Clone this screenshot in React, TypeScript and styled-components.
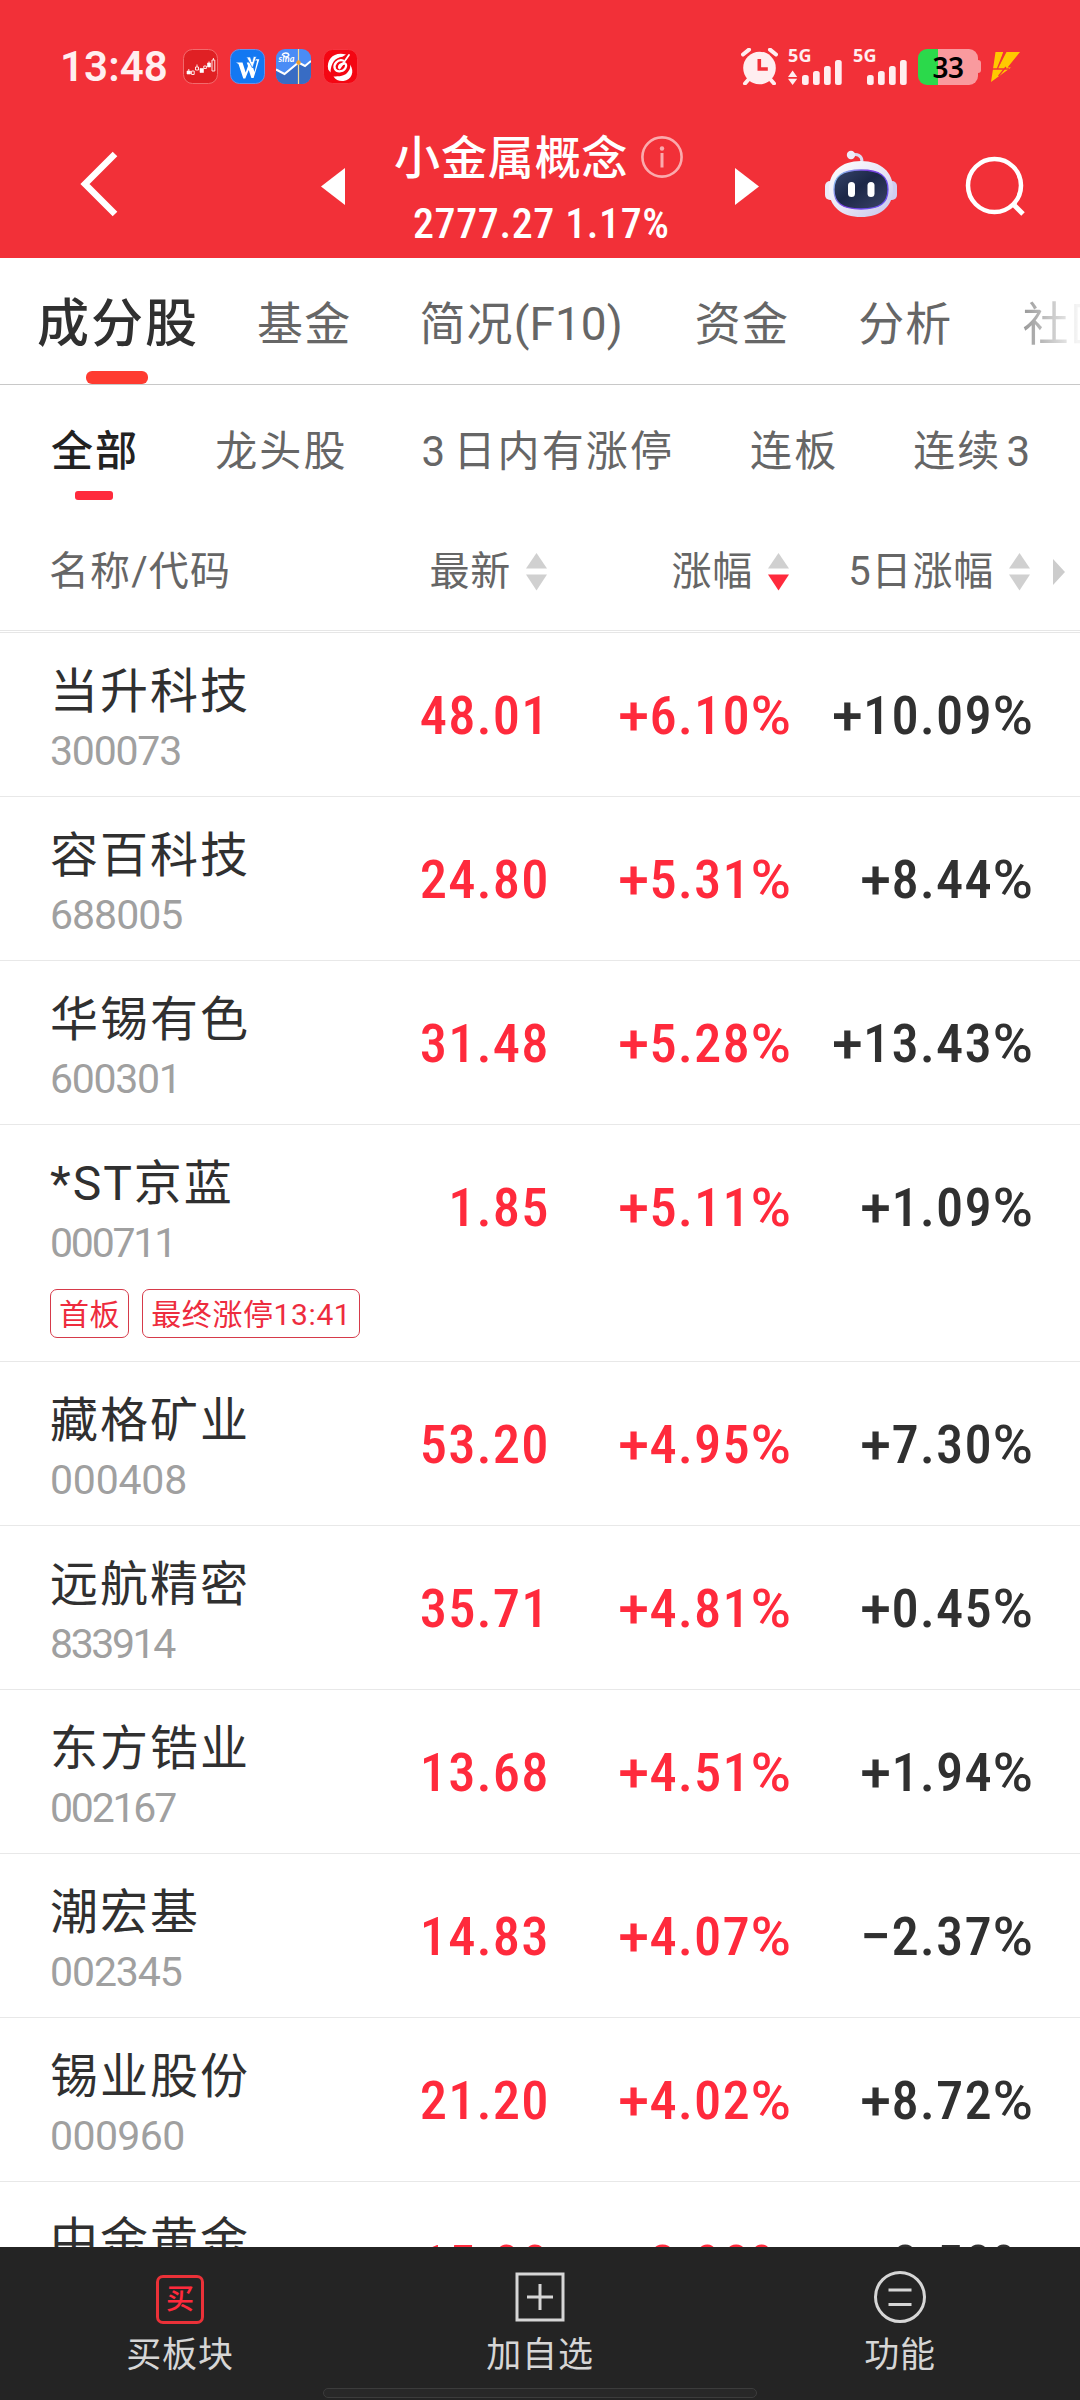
import React from "react";
import styled, { createGlobalStyle } from "styled-components";

const RED = "#ff2a3c";
const CJK = `Roboto, "Noto Sans CJK SC", sans-serif`;
const NUM = `"Roboto Condensed", Roboto, "Noto Sans CJK SC", sans-serif`;

const GlobalStyle = createGlobalStyle`
  * { box-sizing: border-box; }
  body { margin: 0; background: #fff; font-family: ${CJK}; }
`;

const Screen = styled.main`
  display: flex;
  flex-direction: column;
  width: 1080px;
  height: 2400px;
  overflow: hidden;
  background: #fff;
  white-space: nowrap;
`;

/* ---------- header ---------- */
const Header = styled.header`
  display: flex;
  flex-direction: column;
  flex: none;
  height: 258px;
  background: #f23038;
  color: #fff;
`;

const StatusBar = styled.div`
  display: flex;
  justify-content: space-between;
  align-items: center;
  height: 85px;
  margin-top: 24px;
  padding: 0 59px 0 60px;
`;

const StatusGroup = styled.div`
  display: flex;
  align-items: center;
`;

const Clock = styled.span`
  width: 123px;
  font: 600 42px/50px Roboto, sans-serif;
  letter-spacing: 0.1px;
  color: #ffeef0;
`;

const AppIcons = styled.div`
  display: flex;
  gap: 11.5px;
`;

const StatusIcon = styled.svg<{ $gap?: number }>`
  display: block;
  flex: none;
  margin-left: ${(p) => p.$gap ?? 0}px;
`;

const Network = styled.div<{ $gap: number }>`
  display: flex;
  flex-direction: column;
  align-items: flex-start;
  height: 36px;
  margin-left: ${(p) => p.$gap}px;
`;

const NetworkLabel = styled.span`
  height: 11px;
  font: 700 18px/13px "Noto Sans", sans-serif;
  letter-spacing: 0.2px;
  color: #ffeef0;
`;

const Battery = styled.div`
  display: flex;
  align-items: center;
  margin-left: 10px;
`;

const BatteryBody = styled.div`
  width: 60px;
  height: 36px;
  border-radius: 9px;
  background: linear-gradient(90deg, #2bd94b 0 33%, #f99a9e 33%);
  color: #000;
  text-align: center;
  font: 600 28px/36px "Noto Sans", sans-serif;
  letter-spacing: -0.5px;
`;

const BatteryNub = styled.i`
  width: 3px;
  height: 13px;
  border-radius: 0 3px 3px 0;
  background: #f99a9e;
`;

const NavBar = styled.nav`
  display: grid;
  grid-template-columns: 321px 24px 390px 24px 66px 72px 51px 78px;
  align-items: center;
  height: 149px;
`;

const BackIcon = styled.svg`
  display: block;
  margin-left: 76px;
`;

const Arrow = styled.svg`
  display: block;
  margin-top: 5px;
`;

const TitleBlock = styled.div`
  display: flex;
  flex-direction: column;
  align-items: flex-start;
  padding: 15px 0 0 49px;
`;

const TitleLine = styled.div`
  display: flex;
  align-items: center;
  gap: 12px;
  height: 62px;
  font-size: 46px;
  font-weight: 500;
  letter-spacing: 0.9px;
  line-height: 64px;
`;

const InfoIcon = styled.svg`
  display: block;
  margin-top: -3px;
`;

const IndexLine = styled.div`
  margin: 4px 0 0 19px;
  font: 500 42px/62px ${NUM};
  letter-spacing: 0.6px;
  word-spacing: 0;
`;

const Robot = styled.svg`
  display: block;
`;

const Search = styled.svg`
  display: block;
  margin: 6px 0 0 66px;
`;

/* ---------- primary tabs ---------- */
const Tabs = styled.div`
  display: flex;
  align-items: center;
  flex: none;
  height: 127px;
  overflow: hidden;
  border-bottom: 1px solid #c8c8c8;
  padding-left: 37px;
`;

const Tab = styled.a<{ $active?: boolean; $gap?: number }>`
  position: relative;
  flex: none;
  height: 126px;
  margin-left: ${(p) => p.$gap ?? 0}px;
  font-size: ${(p) => (p.$active ? 52 : 46)}px;
  font-weight: ${(p) => (p.$active ? 500 : 400)};
  letter-spacing: ${(p) => (p.$active ? 2 : 1.2)}px;
  line-height: ${(p) => (p.$active ? 134 : 132)}px;
  color: ${(p) => (p.$active ? "#303030" : "#666")};
`;

const TabLatin = styled.span`
  letter-spacing: 0;
`;

const TabMark = styled.i`
  position: absolute;
  left: 49px;
  bottom: 0;
  width: 62px;
  height: 13px;
  border-radius: 6px;
  background: #ff3b30;
`;

const FadingTab = styled(Tab)`
  width: 57px;
  overflow: hidden;
  color: transparent;
  background: linear-gradient(90deg, #999 0, #f4f4f4 54px);
  background-clip: text;
  -webkit-background-clip: text;
`;

/* ---------- secondary tabs ---------- */
const Filters = styled.div`
  display: flex;
  flex: none;
  height: 128px;
  padding-left: 51px;
`;

const Filter = styled.a<{ $active?: boolean; $gap?: number }>`
  position: relative;
  flex: none;
  height: 115px;
  margin-left: ${(p) => p.$gap ?? 0}px;
  font-size: 42px;
  font-weight: ${(p) => (p.$active ? 500 : 400)};
  letter-spacing: 2.1px;
  line-height: 134px;
  color: ${(p) => (p.$active ? "#222" : "#666")};
`;

const FilterMark = styled.i`
  position: absolute;
  left: 24px;
  bottom: 0;
  width: 38px;
  height: 9px;
  border-radius: 3px;
  background: ${RED};
`;

const WideDigit = styled.span<{ $lead?: number }>`
  display: inline-block;
  width: 32px;
  margin-left: ${(p) => p.$lead ?? 0}px;
`;

/* ---------- table ---------- */
const COLUMNS = "376px 172px 242px 290px";

const TableHead = styled.div`
  display: grid;
  grid-template-columns: ${COLUMNS};
  align-items: center;
  flex: none;
  height: 120px;
  border-bottom: 3px double #e6e6e6;
  color: #666;
  font-size: 40px;
  letter-spacing: 0.8px;
`;

const HeadCell = styled.div<{ $first?: boolean; $last?: boolean }>`
  display: flex;
  align-items: center;
  justify-content: ${(p) => (p.$first ? "flex-start" : "flex-end")};
  gap: 15px;
  padding-left: ${(p) => (p.$first ? 49 : 0)}px;
  padding-right: ${(p) => (p.$last ? 15 : 1)}px;
  line-height: 60px;
  letter-spacing: ${(p) => (p.$first ? 1.1 : 0.8)}px;
`;

const MoreArrow = styled.svg`
  display: block;
  margin-left: 8px;
`;

const List = styled.section`
  flex: 1;
  min-height: 0;
  overflow: hidden;
`;

const Row = styled.article`
  display: grid;
  grid-template-columns: ${COLUMNS};
  border-bottom: 1px solid #e8e8e8;
`;

const NameCell = styled.div`
  display: flex;
  flex-direction: column;
  height: 163px;
  padding: 28px 0 0 50px;
`;

const StockName = styled.span`
  height: 62px;
  font-size: 48px;
  line-height: 62px;
  letter-spacing: 2px;
  color: #303030;
`;

const StockCode = styled.span<{ $tracking: number }>`
  height: 56px;
  font-size: 41px;
  line-height: 56px;
  letter-spacing: ${(p) => p.$tracking}px;
  color: #a0a0a0;
`;

const Value = styled.span<{ $tone: "up" | "plain"; $inset?: number }>`
  height: 163px;
  margin-right: -1.5px;
  padding-right: ${(p) => p.$inset ?? 0}px;
  text-align: right;
  font: 500 54.5px/165px ${NUM};
  letter-spacing: 1.1px;
  color: ${(p) => (p.$tone === "up" ? RED : "#303030")};
`;

const WideSign = styled.span`
  font-family: Roboto, sans-serif;
  letter-spacing: 0.6px;
`;

const TagLine = styled.div`
  display: flex;
  gap: 13px;
  grid-column: 1 / -1;
  height: 73px;
  padding: 1px 0 0 50px;
`;

const Tag = styled.span`
  height: 49px;
  padding: 0 8px;
  border: 1px solid #d63a4a;
  border-radius: 7px;
  font-size: 30px;
  line-height: 49px;
  letter-spacing: 0.6px;
  color: #ee2c3e;
`;

/* ---------- bottom bar ---------- */
const BottomBar = styled.footer`
  position: relative;
  display: grid;
  grid-template-columns: repeat(3, 1fr);
  flex: none;
  height: 153px;
  background: #242424;
  color: #d6d6d6;
`;

const Action = styled.button`
  display: flex;
  flex-direction: column;
  align-items: center;
  padding: 22px 0 0;
  border: 0;
  background: none;
  color: inherit;
  font: 400 35px/50px ${CJK};
  letter-spacing: 0.8px;
`;

const ActionIcon = styled.div`
  display: flex;
  align-items: center;
  justify-content: center;
  height: 56px;
  margin-bottom: 6px;
`;

const BuyBadge = styled.span`
  width: 48px;
  height: 49px;
  margin-top: 4px;
  border: 3px solid #ea3138;
  border-radius: 7px;
  color: ${RED};
  font: 500 28px/44px ${CJK};
  letter-spacing: 0;
  text-align: center;
`;

const HomePill = styled.i`
  position: absolute;
  left: 323px;
  bottom: 2px;
  width: 434px;
  height: 10px;
  border: 1px solid #3c3c3c;
  border-radius: 5px;
  background: #282828;
`;

const Signal = ({ data }: { data?: boolean }) => (
  <StatusIcon width="55" height="25" viewBox="0 0 55 25" fill="#ffeef0">
    {data && <path d="M0 17 4.6 10.500 9.200 17zM0 18.800h9.200L4.600 25z" />}
    <rect x="14" y="15" width="6.700" height="10" rx="2.500" />
    <rect x="25" y="11" width="6.700" height="14" rx="2.500" />
    <rect x="36" y="6" width="6.700" height="19" rx="2.500" />
    <rect x="47" y="0" width="6.700" height="25" rx="2.500" />
  </StatusIcon>
);

const Sorter = ({ desc }: { desc?: boolean }) => (
  <svg width="21" height="38" viewBox="0 0 21 38">
    <path d="M10.500 0 21 15.500H0z" fill="#d0d0d0" />
    <path d="M0 21.500h21L10.500 37.500z" fill={desc ? RED : "#d0d0d0"} />
  </svg>
);

const AlarmIcon = () => (
  <StatusIcon width="37" height="37" viewBox="0 0 37 37">
    <circle cx="18.500" cy="20" r="16.300" fill="#ffeef0" />
    <path d="M2 6.500 8 1.600M35 6.500 29 1.600M7.500 31.500 4 35.500M29.500 31.500 33 35.500" stroke="#ffeef0" strokeWidth="4" strokeLinecap="round" />
    <path d="M18.300 11v10h8.500" fill="none" stroke="#f23038" strokeWidth="3.600" />
  </StatusIcon>
);

const CandleAppIcon = () => (
  <svg width="35" height="35" viewBox="0 0 35 35">
    <rect x=".5" y=".5" width="34" height="34" rx="9" fill="#e02024" stroke="#f26a6c" />
    <path d="M4 22h3.500v3H4zM17 19.500h3.500v4H17zM24.500 14h3v4h-3z" fill="#fff" stroke="#fff" strokeWidth=".6" />
    <path d="M8.600 22h2.600v3.500H8.600zM12.500 18h3v3h-3zM20.800 17h2.600v2.500h-2.600zM29 11h2.800v11H29zM14 15.500V18M5.800 20v2M26 12.500v2M30.400 9v2" fill="none" stroke="#ffe6e6" strokeWidth="1" />
  </svg>
);

const WAppIcon = () => (
  <svg width="35" height="35" viewBox="0 0 35 35">
    <rect x=".5" y=".5" width="34" height="34" rx="9" fill="#1378f2" stroke="#6a8fe8" />
    <path d="M6 13.500h6.500l3.200 10L18 17l-1.200-3.500h4.700l3 9.500 2.700-11.500h-2.400l.5-1.200h4L23.600 29h-2.200l-2.700-8-3.400 8.500h-2L8.500 15z" fill="#fff" />
    <path d="M16.500 8h3.800l1.700 5 1.500-5.500h3L22.500 19z" fill="#fff" stroke="#1378f2" strokeWidth=".7" />
  </svg>
);

const ChartAppIcon = () => (
  <svg width="35" height="35" viewBox="0 0 35 35">
    <defs>
      <clipPath id="chartClip"><rect width="35" height="35" rx="9" /></clipPath>
    </defs>
    <g clipPath="url(#chartClip)">
      <rect width="35" height="35" fill="#4a8cf6" />
      <path d="M0 20.500 8.500 25 22.500 13.500 29 17 35 12v23H0z" fill="#386cc4" />
      <path d="M0 20.500 8.500 25 22.500 13.500 29 17 35 12" fill="none" stroke="#fff" strokeWidth="2" />
      <path d="M22.500 0v35" stroke="#f5dc9a" strokeWidth="1.200" />
      <circle cx="22.500" cy="13.500" r="2.200" fill="#f0a030" />
      <path d="M6 6.500c1-3 6-3.500 7-.5-1 2.500-5 2.500-5.500.5" fill="none" stroke="#fff" strokeWidth="1.300" />
      <text x="2.500" y="13" fontSize="9" fontWeight="700" fontStyle="italic" fontFamily="Lato" fill="#fff" textLength="16">sina</text>
    </g>
  </svg>
);

const SwirlAppIcon = () => (
  <svg width="35" height="35" viewBox="0 0 35 35">
    <rect x=".5" y=".5" width="34" height="34" rx="9" fill="#f40612" stroke="#f6353f" />
    <path d="M23 5.500C12 2 3 9.500 5.200 20.500l2.300 3C8 14 12 8.500 19.500 7.800z" fill="#fff" />
    <path d="M10.500 27.500c5-.5 12 1 16-7 .8-1.800.8-3.500.5-5 5 7 1.500 15.500-6.500 16.500-4 .4-8-1-10-4.500z" fill="#fff" />
    <path d="M20 11.500c-5.500-1.500-10 4-8 8.500 2 3.800 9.500 3 11-2.500.5-2-.5-3.200-2-3-2.500.4-5 2-5 4" fill="none" stroke="#fff" strokeWidth="2.300" strokeLinecap="round" />
    <path d="M26 6 16.500 19.500" stroke="#fff" strokeWidth="1.800" strokeLinecap="round" />
  </svg>
);

const BoltIcon = () => (
  <StatusIcon $gap={9} width="31" height="32" viewBox="0 0 31 32" fill="#ffc800">
    <path d="M5.500 1h7.800L9 15.500 16.500 1H30L17.500 16.500H21L1 31 3 18z" />
    <path d="M14.500 0 7.500 17.500M2 18h17M16 16 8.500 25" fill="none" stroke="#f23038" strokeWidth="1.300" />
  </StatusIcon>
);

const RobotIcon = () => (
  <Robot width="72" height="68" viewBox="0 0 72 68">
    <defs>
      <linearGradient id="shell" x1="0" y1="0" x2="1" y2="1">
        <stop offset="0" stopColor="#fff" />
        <stop offset=".55" stopColor="#e6e4f6" />
        <stop offset="1" stopColor="#c4c3ea" />
      </linearGradient>
      <linearGradient id="rim" x1="0" y1="0" x2="1" y2=".5">
        <stop offset="0" stopColor="#8fe0f4" />
        <stop offset=".5" stopColor="#7a3fe0" />
        <stop offset="1" stopColor="#6a50f0" />
      </linearGradient>
      <linearGradient id="visor" x1="0" y1="0" x2="1" y2="1">
        <stop offset="0" stopColor="#37456c" />
        <stop offset=".45" stopColor="#1c2747" />
        <stop offset="1" stopColor="#3a4468" />
      </linearGradient>
    </defs>
    <path d="M26 5.500c6-2.500 11 0 11 6" fill="none" stroke="#dcdaf0" strokeWidth="3" />
    <circle cx="26" cy="5" r="4.200" fill="#eeecfa" />
    <rect x="0" y="31" width="12" height="19" rx="5" fill="#eceaf8" />
    <rect x="60" y="31" width="12" height="19" rx="5" fill="#cfcdf0" />
    <path d="M36 11c20 0 32 11 32 28 0 18-13 28-32 28S4 57 4 39C4 22 16 11 36 11z" fill="url(#shell)" />
    <path d="M36 20c19 0 27 6 27 19.500S55 59 36 59 9 53 9 39.500 17 20 36 20z" fill="url(#visor)" stroke="url(#rim)" strokeWidth="1.300" />
    <rect x="23" y="32" width="7" height="15" rx="3.500" fill="#fff" />
    <rect x="42.500" y="32" width="7" height="15" rx="3.500" fill="#fff" />
  </Robot>
);

type Stock = {
  name: string;
  code: string;
  tracking: number;
  price: string;
  pct: string;
  five: string;
  tags?: string[];
};

const STOCKS: Stock[] = [
  { name: "当升科技", code: "300073", tracking: -1.2, price: "48.01", pct: "+6.10%", five: "+10.09%" },
  { name: "容百科技", code: "688005", tracking: -1, price: "24.80", pct: "+5.31%", five: "+8.44%" },
  { name: "华锡有色", code: "600301", tracking: -1.3, price: "31.48", pct: "+5.28%", five: "+13.43%" },
  { name: "*ST京蓝", code: "000711", tracking: -2.2, price: "1.85", pct: "+5.11%", five: "+1.09%", tags: ["首板", "最终涨停13:41"] },
  { name: "藏格矿业", code: "000408", tracking: -0.2, price: "53.20", pct: "+4.95%", five: "+7.30%" },
  { name: "远航精密", code: "833914", tracking: -2.4, price: "35.71", pct: "+4.81%", five: "+0.45%" },
  { name: "东方锆业", code: "002167", tracking: -2.2, price: "13.68", pct: "+4.51%", five: "+1.94%" },
  { name: "潮宏基", code: "002345", tracking: -1.1, price: "14.83", pct: "+4.07%", five: "−2.37%" },
  { name: "锡业股份", code: "000960", tracking: -0.6, price: "21.20", pct: "+4.02%", five: "+8.72%" },
  { name: "中金黄金", code: "600489", tracking: -0.6, price: "15.00", pct: "+3.98%", five: "+8.58%" },
];

/* Signs and the percent mark are set wider than the digits between them. */
const Percent = ({ text }: { text: string }) => (
  <>
    <WideSign>{text[0]}</WideSign>
    {text.slice(1, -1)}
    <WideSign>%</WideSign>
  </>
);

export default function App() {
  return (
    <Screen>
      <GlobalStyle />
      <Header>
        <StatusBar>
          <StatusGroup>
            <Clock>13:48</Clock>
            <AppIcons>
              <CandleAppIcon />
              <WAppIcon />
              <ChartAppIcon />
              <SwirlAppIcon />
            </AppIcons>
          </StatusGroup>
          <StatusGroup>
            <AlarmIcon />
            <Network $gap={10}>
              <NetworkLabel>5G</NetworkLabel>
              <Signal data />
            </Network>
            <Network $gap={10}>
              <NetworkLabel>5G</NetworkLabel>
              <Signal />
            </Network>
            <Battery>
              <BatteryBody>33</BatteryBody>
              <BatteryNub />
            </Battery>
            <BoltIcon />
          </StatusGroup>
        </StatusBar>
        <NavBar>
          <BackIcon width="46" height="70" viewBox="0 0 46 70" fill="none">
            <path d="M39 5 9 35l30 30" stroke="#fff" strokeWidth="6.500" />
          </BackIcon>
          <Arrow width="24" height="37" viewBox="0 0 24 37"><path d="M24 0v37L0 18.500z" fill="#fff" /></Arrow>
          <TitleBlock>
            <TitleLine>
              小金属概念
              <InfoIcon width="42" height="42" viewBox="0 0 42 42" fill="none">
                <circle cx="21" cy="21" r="19.600" stroke="#fbaaad" strokeWidth="2.600" />
                <path d="M21 17v14.500" stroke="#fbaaad" strokeWidth="3" />
                <circle cx="21" cy="12.500" r="2.200" fill="#fbaaad" />
              </InfoIcon>
            </TitleLine>
            <IndexLine>2777.27 1.17%</IndexLine>
          </TitleBlock>
          <Arrow width="24" height="37" viewBox="0 0 24 37"><path d="M0 0v37l24-18.500z" fill="#fff" /></Arrow>
          <span />
          <RobotIcon />
          <Search width="64" height="64" viewBox="0 0 64 64" fill="none">
            <circle cx="31.500" cy="30.500" r="26.500" stroke="#fff" strokeWidth="4.500" />
            <path d="m50 49 10 10" stroke="#fff" strokeWidth="5" />
          </Search>
        </NavBar>
      </Header>

      <Tabs>
        <Tab $active>成分股<TabMark /></Tab>
        <Tab $gap={58}>基金</Tab>
        <Tab $gap={68}>简况<TabLatin>(F10)</TabLatin></Tab>
        <Tab $gap={72}>资金</Tab>
        <Tab $gap={69}>分析</Tab>
        <FadingTab $gap={70}>社区</FadingTab>
      </Tabs>

      <Filters>
        <Filter $active>全部<FilterMark /></Filter>
        <Filter $gap={76}>龙头股</Filter>
        <Filter $gap={74}><WideDigit>3</WideDigit>日内有涨停</Filter>
        <Filter $gap={76}>连板</Filter>
        <Filter $gap={75}>连续<WideDigit $lead={5}>3</WideDigit></Filter>
      </Filters>

      <TableHead>
        <HeadCell $first>名称/代码</HeadCell>
        <HeadCell>最新<Sorter /></HeadCell>
        <HeadCell>涨幅<Sorter desc /></HeadCell>
        <HeadCell $last>
          5日涨幅<Sorter />
          <MoreArrow width="12" height="26" viewBox="0 0 12 26"><path d="M0 0v26l12-13z" fill="#ccc" /></MoreArrow>
        </HeadCell>
      </TableHead>

      <List>
        {STOCKS.map((s) => (
          <Row key={s.code}>
            <NameCell>
              <StockName>{s.name}</StockName>
              <StockCode $tracking={s.tracking}>{s.code}</StockCode>
            </NameCell>
            <Value $tone="up">{s.price}</Value>
            <Value $tone="up"><Percent text={s.pct} /></Value>
            <Value $tone="plain" $inset={48}><Percent text={s.five} /></Value>
            {s.tags && (
              <TagLine>
                {s.tags.map((t) => (
                  <Tag key={t}>{t}</Tag>
                ))}
              </TagLine>
            )}
          </Row>
        ))}
      </List>

      <BottomBar>
        <Action>
          <ActionIcon><BuyBadge>买</BuyBadge></ActionIcon>
          买板块
        </Action>
        <Action>
          <ActionIcon>
            <svg width="50" height="50" viewBox="0 0 50 50" fill="none" stroke="#d6d6d6" strokeWidth="3">
              <path d="M2 2h46v46H2zM12 25h26M25 12v26" />
            </svg>
          </ActionIcon>
          加自选
        </Action>
        <Action>
          <ActionIcon>
            <svg width="52" height="52" viewBox="0 0 52 52" fill="none" stroke="#d6d6d6" strokeWidth="3">
              <circle cx="26" cy="26" r="24.500" />
              <path d="M14.500 19h23M14.500 33.500h23" />
            </svg>
          </ActionIcon>
          功能
        </Action>
        <HomePill />
      </BottomBar>
    </Screen>
  );
}
